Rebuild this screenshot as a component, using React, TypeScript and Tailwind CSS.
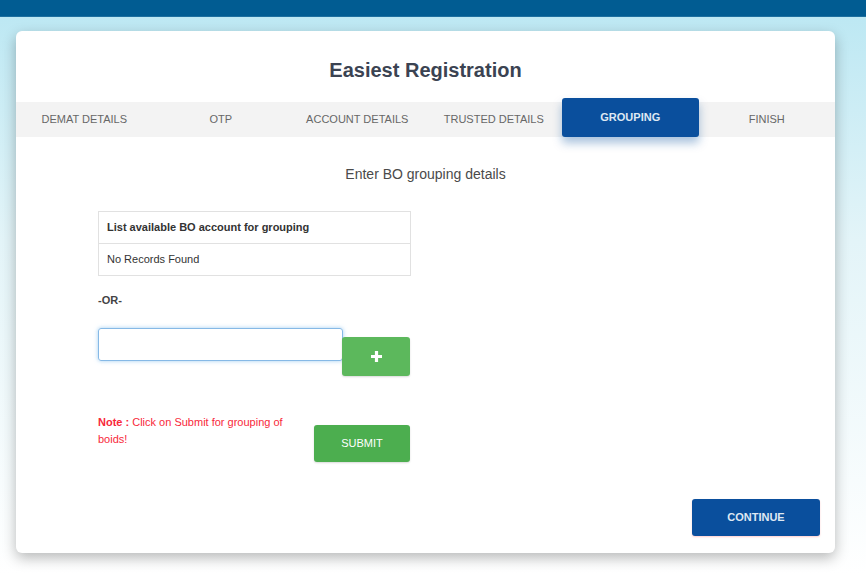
import React, { useState } from "react";

const tabs = ["DEMAT DETAILS", "OTP", "ACCOUNT DETAILS", "TRUSTED DETAILS", "GROUPING", "FINISH"];

export default function App() {
    const [active] = useState("GROUPING");
    const [boid, setBoid] = useState("");

    return (
        <div className="w-[866px] h-[575px] overflow-hidden bg-white font-['Liberation_Sans',Arial,sans-serif]">
            <div className="h-[17px] bg-[#015c92] border-b border-[#1d6f9f]" />

            <div className="h-[558px] bg-gradient-to-b from-[#bde8f3] via-[#e3f4f8] via-40% to-white pt-[14px] pl-4">
                <div className="relative w-[819px] h-[522px] bg-white rounded-md shadow-[0_5px_14px_rgba(0,0,0,0.28)]">
                    <h1 className="pt-[28px] text-center text-[20px] leading-[22px] font-bold text-[#3b4352]">
                        Easiest Registration
                    </h1>

                    {/* steps */}
                    <div className="mt-[21px] grid grid-cols-6 h-[35px] bg-[#f3f3f3]">
                        {tabs.map((t) => (
                            <div key={t} className="relative flex items-center justify-center">
                                {t === active ? (
                                    <div className="absolute -top-1 bottom-0 left-0 right-0 flex items-center justify-center rounded-[3px] bg-[#0a4f9d] shadow-[0_6px_10px_rgba(10,79,157,0.35)] text-[11px] font-bold text-[#dfe8f3]">
                                        {t}
                                    </div>
                                ) : (
                                    <span className="text-[11px] text-[#676767]">{t}</span>
                                )}
                            </div>
                        ))}
                    </div>

                    <p className="mt-[29px] text-center text-[14px] leading-4 text-[#4a4a4a]">
                        Enter BO grouping details
                    </p>

                    <div className="pl-[82px]">
                        <div className="mt-[29px] w-[313px] border border-[#e1e1e1] text-[11px] text-[#333]">
                            <div className="h-[32px] flex items-center px-2 font-bold border-b border-[#e1e1e1]">
                                List available BO account for grouping
                            </div>
                            <div className="h-[31px] flex items-center px-2">No Records Found</div>
                        </div>

                        <p className="mt-[17px] text-[11px] leading-[14px] font-bold text-[#444]">-OR-</p>

                        <div className="mt-[21px] flex items-start">
                            <input
                                value={boid}
                                onChange={(e) => setBoid(e.target.value)}
                                className="w-[245px] h-[33px] rounded-[3px] border border-[#86b9e6] shadow-[0_0_4px_rgba(102,175,233,0.6)] px-2 text-[12px] outline-none"
                            />
                            <button className="mt-[9px] -ml-px w-[68px] h-[39px] rounded-[3px] bg-[#5cb85c] flex items-center justify-center shadow-[0_1px_2px_rgba(0,0,0,0.15)]">
                                <svg width="13" height="13" viewBox="0 0 13 13">
                                    <path d="M6.5 1v11M1 6.5h11" stroke="white" strokeWidth="3.2" />
                                </svg>
                            </button>
                        </div>

                        <div className="mt-[38px] flex items-start">
                            <p className="w-[192px] text-[11px] leading-[17px] text-[#f8283a]">
                                <b>Note :</b> Click on Submit for grouping of boids!
                            </p>
                            <button className="ml-[24px] mt-[11px] w-[96px] h-[37px] rounded-[3px] bg-[#4cae4f] text-[11px] text-white shadow-[0_1px_2px_rgba(0,0,0,0.15)]">
                                SUBMIT
                            </button>
                        </div>
                    </div>

                    <div className="mt-[37px] flex justify-end pr-[15px]">
                        <button className="w-[128px] h-[37px] rounded-[3px] bg-[#0a4f9d] text-[11px] font-bold text-[#dfe8f3] shadow-[0_1px_2px_rgba(255,0,0,0.2)]">
                            CONTINUE
                        </button>
                    </div>
                </div>
            </div>
        </div>
    );
}
